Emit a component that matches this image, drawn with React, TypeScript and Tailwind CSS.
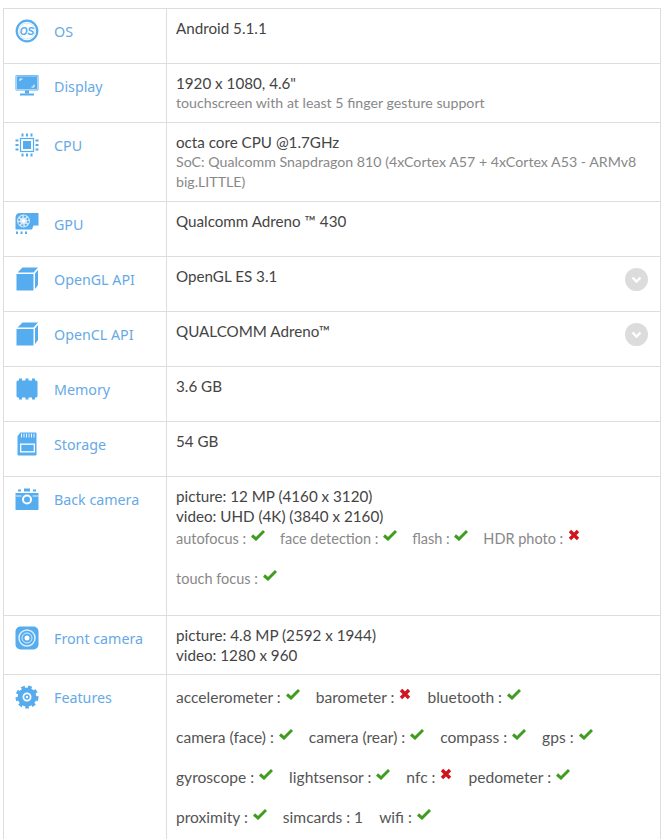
import type { ReactNode } from 'react';

const BLUE = '#55acee';

function OsIcon() {
  return (
    <svg width="24" height="24" viewBox="0 0 24 24">
      <circle cx="12" cy="12" r="10.300" fill="none" stroke={BLUE} strokeWidth="2.200" />
      <circle cx="12" cy="12" r="8" fill="none" stroke={BLUE} strokeWidth="0.500" opacity="0.500" />
      <text x="12" y="15.500" textAnchor="middle" fontSize="10" fontWeight="700" fontStyle="italic" fill={BLUE} fontFamily="'Liberation Sans', sans-serif">OS</text>
    </svg>
  );
}

function DisplayIcon() {
  return (
    <svg width="24" height="24" viewBox="0 0 24 24">
      <rect x="0.500" y="1" width="23" height="15.500" rx="1" fill={BLUE} />
      <rect x="1.500" y="2" width="21" height="13.500" fill="none" stroke="#cfe6f8" strokeWidth="0.700" />
      <path d="M5 7V5h2.500M19 10.500v2.500h-2.500" fill="none" stroke="#fff" strokeWidth="1" />
      <rect x="10" y="16.500" width="4" height="3" fill={BLUE} />
      <rect x="5" y="19.500" width="14" height="2" fill={BLUE} />
    </svg>
  );
}

function CpuIcon() {
  return (
    <svg width="24" height="24" viewBox="0 0 24 24" fill={BLUE}>
      <rect x="5.500" y="5.500" width="13" height="13" fill="none" stroke={BLUE} strokeWidth="1.200" />
      <rect x="8" y="8" width="8" height="8" />
      <path d="M6.500 0.500h2v3h-2zM11 0.500h2v3h-2zM15.500 0.500h2v3h-2zM6.500 20.500h2v3h-2zM11 20.500h2v3h-2zM15.500 20.500h2v3h-2zM0.500 6.500h3v2h-3zM0.500 11h3v2h-3zM0.500 15.500h3v2h-3zM20.500 6.500h3v2h-3zM20.500 11h3v2h-3zM20.500 15.500h3v2h-3z" />
    </svg>
  );
}

function GpuIcon() {
  return (
    <svg width="24" height="24" viewBox="0 0 24 24">
      <path d="M0.500 6Q0.500 1 5 1h18.500v12.500h-5L17 17.500H0.500z" fill={BLUE} />
      <circle cx="8.500" cy="9" r="6.500" fill="#d5e9f9" />
      <circle cx="8.500" cy="9" r="4.500" fill="none" stroke={BLUE} strokeWidth="1.800" strokeDasharray="2 1.500" />
      <circle cx="8.500" cy="9" r="1.800" fill="#fff" />
      <path d="M1 19.500h2v2.500H1zM5.500 19.500h2v2.500h-2zM10 19.500h2v2.500h-2z" fill={BLUE} />
    </svg>
  );
}

function CubeIcon() {
  return (
    <svg width="24" height="24" viewBox="0 0 24 24" fill={BLUE}>
      <path d="M1.500 7h17v16.500h-17zM2.500 5.500 7.500 0.500h15.500l-4.500 5zM20 6.500 23 3v15l-3 4z" />
    </svg>
  );
}

function MemoryIcon() {
  return (
    <svg width="24" height="24" viewBox="0 0 24 24" fill={BLUE}>
      <rect x="1.500" y="3.500" width="21" height="17" rx="1.500" />
      <path d="M4 1.500h3v3H4zM10.500 1.500h3v3h-3zM17 1.500h3v3h-3zM4 19.500h3v3H4zM10.500 19.500h3v3h-3zM17 19.500h3v3h-3z" />
    </svg>
  );
}

function StorageIcon() {
  return (
    <svg width="24" height="24" viewBox="0 0 24 24">
      <path d="M5.500 0.500h15a1 1 0 0 1 1 1v21a1 1 0 0 1-1 1h-17a1 1 0 0 1-1-1V4z" fill={BLUE} />
      <path d="M6.500 1.500v4M9 1.500v4M11.500 1.500v4M14 1.500v4M16.500 1.500v4M19 1.500v4" stroke="#fff" strokeWidth="0.900" />
      <rect x="5" y="11.500" width="15" height="9" fill="#fff" />
      <rect x="6.300" y="12.800" width="12.400" height="6.400" fill={BLUE} />
    </svg>
  );
}

function BackCameraIcon() {
  return (
    <svg width="24" height="24" viewBox="0 0 24 24">
      <path d="M0.500 6h23v17h-23z" fill={BLUE} />
      <path d="M3 2.500h3v2H3zM9 1.500h6v3H9zM18 2.500h3v2h-3z" fill={BLUE} />
      <path d="M0.500 9h6M17.500 9h6" stroke="#fff" strokeWidth="0.800" />
      <circle cx="12" cy="12.500" r="5" fill="#fff" />
      <circle cx="12" cy="12.500" r="3" fill={BLUE} />
    </svg>
  );
}

function FrontCameraIcon() {
  return (
    <svg width="24" height="24" viewBox="0 0 24 24">
      <rect x="0.500" y="0.500" width="23" height="23" rx="5" fill={BLUE} />
      <circle cx="12" cy="12" r="8" fill="none" stroke="#dceefb" strokeWidth="1.500" />
      <circle cx="12" cy="12" r="5" fill="none" stroke="#dceefb" strokeWidth="1" />
      <circle cx="12" cy="12" r="2.500" fill="#fff" />
    </svg>
  );
}

function FeaturesIcon() {
  return (
    <svg width="24" height="24" viewBox="0 0 24 24">
      <circle cx="12" cy="12" r="7" fill="none" stroke={BLUE} strokeWidth="5" />
      <circle cx="12" cy="12" r="9.500" fill="none" stroke={BLUE} strokeWidth="4" strokeDasharray="3.500 3" />
      <circle cx="12" cy="12" r="2" fill="none" stroke={BLUE} strokeWidth="1.500" />
    </svg>
  );
}

function Yes() {
  return (
    <svg width="14" height="12" viewBox="0 0 14 12" className="inline-block align-[3px] ml-[1px]">
      <path d="M1 6.500 5 10 13 2" fill="none" stroke="#3f9c1f" strokeWidth="3" />
    </svg>
  );
}

function No() {
  return (
    <svg width="12" height="12" viewBox="0 0 12 12" className="inline-block align-[3px] ml-[1px]">
      <path d="M2 2 10 10M10 2 2 10" fill="none" stroke="#d2121c" strokeWidth="3.400" />
    </svg>
  );
}

function Chevron() {
  return (
    <div className="absolute right-[12px] top-[11px] w-[23px] h-[23px] rounded-full bg-[#dcdcdc] flex items-center justify-center">
      <svg width="11" height="8" viewBox="0 0 11 8">
        <path d="M1.500 1.500 5.500 5.500 9.500 1.500" fill="none" stroke="#fff" strokeWidth="2.400" />
      </svg>
    </div>
  );
}

function Row({ icon, label, h, children, last }: { icon: ReactNode; label: string; h: string; children: ReactNode; last?: boolean }) {
  return (
    <div className={`flex ${h} ${last ? '' : 'border-b border-[#dddddd]'}`}>
      <div className="w-[163px] shrink-0 flex items-start border-r border-[#dddddd] pl-[11px] pt-[10px]">
        <div className="w-[24px] h-[24px] shrink-0">{icon}</div>
        <div className="ml-[15px] pt-[4px] text-[14.250px] leading-[18px] text-[#66a9e6] font-['Noto_Sans',sans-serif]">{label}</div>
      </div>
      <div className="relative flex-1 pl-[9px] pt-[9px] text-[15.200px] leading-[20px] text-[#444444]">{children}</div>
    </div>
  );
}

function Sub({ children }: { children: ReactNode }) {
  return <div className="text-[14.200px] text-[#888888]">{children}</div>;
}

function Flag({ name, children, className }: { name: string; children: ReactNode; className: string }) {
  return (
    <span className={`inline-block ${className}`}>
      {name} : {children}
    </span>
  );
}

function CamFlag({ name, children }: { name: string; children: ReactNode }) {
  return <Flag name={name} className="mr-[15px] text-[14.500px] text-[#888888]">{children}</Flag>;
}

function FeatureFlag({ name, children }: { name: string; children: ReactNode }) {
  return <Flag name={name} className="mr-[16px] text-[15.600px] text-[#555555]">{children}</Flag>;
}

function Features({ children }: { children: ReactNode }) {
  return <div className="h-[40px] whitespace-nowrap">{children}</div>;
}

export default function App() {
  return (
    <div className="w-[665px] h-[839px] overflow-hidden bg-white font-['Lato',sans-serif]">
      <div className="ml-[3px] mt-[8px] w-[658px] border border-[#dddddd]">
        <Row icon={<OsIcon />} label="OS" h="h-[55px]">Android 5.1.1</Row>
        <Row icon={<DisplayIcon />} label="Display" h="h-[59px]">
          1920 x 1080, 4.6"
          <Sub>touchscreen with at least 5 finger gesture support</Sub>
        </Row>
        <Row icon={<CpuIcon />} label="CPU" h="h-[79px]">
          octa core CPU @1.7GHz
          <Sub>SoC: Qualcomm Snapdragon 810 (4xCortex A57 + 4xCortex A53 - ARMv8 big.LITTLE)</Sub>
        </Row>
        <Row icon={<GpuIcon />} label="GPU" h="h-[55px]">Qualcomm Adreno ™ 430</Row>
        <Row icon={<CubeIcon />} label="OpenGL API" h="h-[55px]">OpenGL ES 3.1<Chevron /></Row>
        <Row icon={<CubeIcon />} label="OpenCL API" h="h-[55px]">QUALCOMM Adreno™<Chevron /></Row>
        <Row icon={<MemoryIcon />} label="Memory" h="h-[55px]">3.6 GB</Row>
        <Row icon={<StorageIcon />} label="Storage" h="h-[55px]">54 GB</Row>
        <Row icon={<BackCameraIcon />} label="Back camera" h="h-[139px]">
          <div>picture: 12 MP (4160 x 3120)</div>
          <div>video: UHD (4K) (3840 x 2160)</div>
          <div className="h-[40px] pt-[2px] whitespace-nowrap">
            <CamFlag name="autofocus"><Yes /></CamFlag>
            <CamFlag name="face detection"><Yes /></CamFlag>
            <CamFlag name="flash"><Yes /></CamFlag>
            <CamFlag name="HDR photo"><No /></CamFlag>
          </div>
          <div className="pt-[2px]"><CamFlag name="touch focus"><Yes /></CamFlag></div>
        </Row>
        <Row icon={<FrontCameraIcon />} label="Front camera" h="h-[59px]">
          <div>picture: 4.8 MP (2592 x 1944)</div>
          <div>video: 1280 x 960</div>
        </Row>
        <Row icon={<FeaturesIcon />} label="Features" h="h-[170px]" last>
          <div className="pt-[3px]">
            <Features>
              <FeatureFlag name="accelerometer"><Yes /></FeatureFlag>
              <FeatureFlag name="barometer"><No /></FeatureFlag>
              <FeatureFlag name="bluetooth"><Yes /></FeatureFlag>
            </Features>
            <Features>
              <FeatureFlag name="camera (face)"><Yes /></FeatureFlag>
              <FeatureFlag name="camera (rear)"><Yes /></FeatureFlag>
              <FeatureFlag name="compass"><Yes /></FeatureFlag>
              <FeatureFlag name="gps"><Yes /></FeatureFlag>
            </Features>
            <Features>
              <FeatureFlag name="gyroscope"><Yes /></FeatureFlag>
              <FeatureFlag name="lightsensor"><Yes /></FeatureFlag>
              <FeatureFlag name="nfc"><No /></FeatureFlag>
              <FeatureFlag name="pedometer"><Yes /></FeatureFlag>
            </Features>
            <Features>
              <FeatureFlag name="proximity"><Yes /></FeatureFlag>
              <FeatureFlag name="simcards">1</FeatureFlag>
              <FeatureFlag name="wifi"><Yes /></FeatureFlag>
            </Features>
          </div>
        </Row>
      </div>
    </div>
  );
}
